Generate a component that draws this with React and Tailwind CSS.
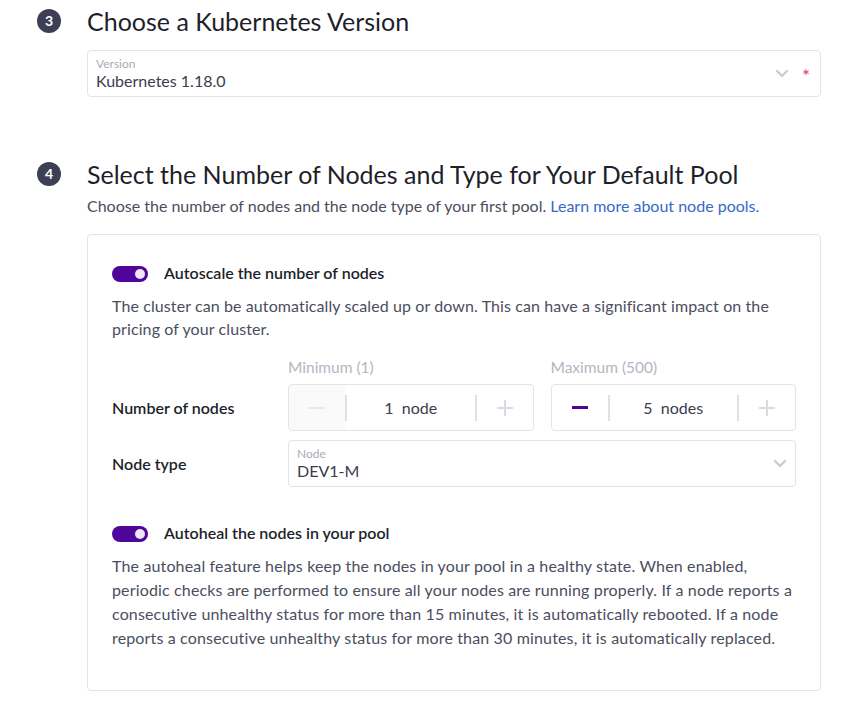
import React from "react";

const font = { fontFamily: "Lato, 'Noto Sans', sans-serif" };

function Step({ n }) {
  return (
    <div className="w-[24px] h-[24px] rounded-full bg-[#3d3f55] text-white flex items-center justify-center text-[14px] font-bold leading-none shrink-0">
      {n}
    </div>
  );
}

function Chevron() {
  return (
    <svg width="14" height="9" viewBox="0 0 14 9" fill="none" stroke="#c9cbd6" strokeWidth="2.4" strokeLinecap="round" strokeLinejoin="round">
      <polyline points="2 2 7 7 12 2" />
    </svg>
  );
}

function Toggle() {
  return (
    <div className="mt-[5px] w-[36px] h-[16px] rounded-full bg-[#4f0599] flex items-center justify-end pr-[3px] shrink-0">
      <div className="w-[10px] h-[10px] rounded-full bg-[#ece6f7]" />
    </div>
  );
}

function Stepper({ value, unit, minusActive }) {
  return (
    <div className="flex-1 h-[47px] border border-[#e3e4ea] rounded-[4px] flex items-center bg-white">
      <div className={"w-[56px] h-full flex items-center justify-center rounded-l-[4px] " + (minusActive ? "" : "bg-[#fafafb]")}>
        <div className={minusActive ? "w-[16px] h-[3px] bg-[#4f0599]" : "w-[16px] h-[2px] bg-[#e6e7ec]"} />
      </div>
      <div className="w-[2px] h-[26px] bg-[#dfe1e8]" />
      <div className="flex-1 text-center text-[16px] text-[#3a3d4c]">
        {value}&nbsp; {unit}
      </div>
      <div className="w-[2px] h-[26px] bg-[#dfe1e8]" />
      <div className="w-[56px] h-full flex items-center justify-center">
        <svg width="18" height="18" viewBox="0 0 18 18" stroke="#d9dbe3" strokeWidth="2">
          <line x1="9" y1="1" x2="9" y2="17" />
          <line x1="1" y1="9" x2="17" y2="9" />
        </svg>
      </div>
    </div>
  );
}

export default function App() {
  return (
    <div className="w-[863px] h-[712px] bg-white overflow-hidden text-[#4b4e5e]" style={font}>
      {/* Section 3 */}
      <div className="flex items-center gap-[26px] pl-[37px] pt-[7px]">
        <Step n="3" />
        <h2 className="text-[25px] leading-[28px] text-[#1e1f2b]">Choose a Kubernetes Version</h2>
      </div>
      <div className="ml-[87px] mr-[42px] mt-[15px] h-[47px] border border-[#e3e4ea] rounded-[4px] flex items-center pl-[8px] pr-[10px]">
        <div className="flex-1 flex flex-col">
          <span className="text-[12px] leading-[14px] text-[#a9abb8]">Version</span>
          <span className="text-[16px] leading-[20px] text-[#3a3d4c]">Kubernetes 1.18.0</span>
        </div>
        <Chevron />
        <span className="ml-[13px] text-[#e5397a] text-[19px] leading-none pt-[4px]">*</span>
      </div>

      {/* Section 4 */}
      <div className="flex items-center gap-[26px] pl-[37px] mt-[63px]">
        <Step n="4" />
        <h2 className="text-[25px] leading-[28px] text-[#1e1f2b]">Select the Number of Nodes and Type for Your Default Pool</h2>
      </div>
      <p className="ml-[87px] mt-[6px] text-[16px] leading-[24px]">
        Choose the number of nodes and the node type of your first pool.{" "}
        <span className="text-[#3769c9]">Learn more about node pools.</span>
      </p>

      <div className="ml-[87px] mr-[42px] mt-[16px] h-[457px] border border-[#e3e4ea] rounded-[4px] px-[24px] pt-[26px]">
        <div className="flex items-start gap-[16px]">
          <Toggle />
          <span className="text-[16px] leading-[24px] font-semibold text-[#1e1f2b]">Autoscale the number of nodes</span>
        </div>
        <p className="mt-[9px] text-[16px] leading-[23px] tracking-[0.1px]">
          The cluster can be automatically scaled up or down. This can have a significant impact on the
          <br />
          pricing of your cluster.
        </p>

        <div className="mt-[17px] flex">
          <div className="w-[176px]" />
          <div className="flex-1 flex gap-[17px]">
            <div className="flex-1 text-[15.5px] leading-[20px] text-[#b4b6c2]">Minimum (1)</div>
            <div className="flex-1 text-[15.5px] leading-[20px] text-[#b4b6c2]">Maximum (500)</div>
          </div>
        </div>
        <div className="mt-[7px] flex items-center">
          <div className="w-[176px] text-[16px] font-semibold text-[#1e1f2b]">Number of nodes</div>
          <div className="flex-1 flex gap-[17px]">
            <Stepper value="1" unit="node" />
            <Stepper value="5" unit="nodes" minusActive />
          </div>
        </div>
        <div className="mt-[9px] flex items-center">
          <div className="w-[176px] text-[16px] font-semibold text-[#1e1f2b]">Node type</div>
          <div className="flex-1 h-[47px] border border-[#e3e4ea] rounded-[4px] flex items-center pl-[8px] pr-[8px]">
            <div className="flex-1 flex flex-col">
              <span className="text-[12px] leading-[14px] text-[#a9abb8]">Node</span>
              <span className="text-[16px] leading-[20px] text-[#3a3d4c]">DEV1-M</span>
            </div>
            <Chevron />
          </div>
        </div>

        <div className="mt-[34px] flex items-start gap-[16px]">
          <Toggle />
          <span className="text-[16px] leading-[24px] font-semibold text-[#1e1f2b]">Autoheal the nodes in your pool</span>
        </div>
        <p className="mt-[9px] text-[16px] leading-[24px] tracking-[0.15px]">
          The autoheal feature helps keep the nodes in your pool in a healthy state. When enabled,
          <br />
          periodic checks are performed to ensure all your nodes are running properly. If a node reports a
          <br />
          consecutive unhealthy status for more than 15 minutes, it is automatically rebooted. If a node
          <br />
          reports a consecutive unhealthy status for more than 30 minutes, it is automatically replaced.
        </p>
      </div>
    </div>
  );
}
